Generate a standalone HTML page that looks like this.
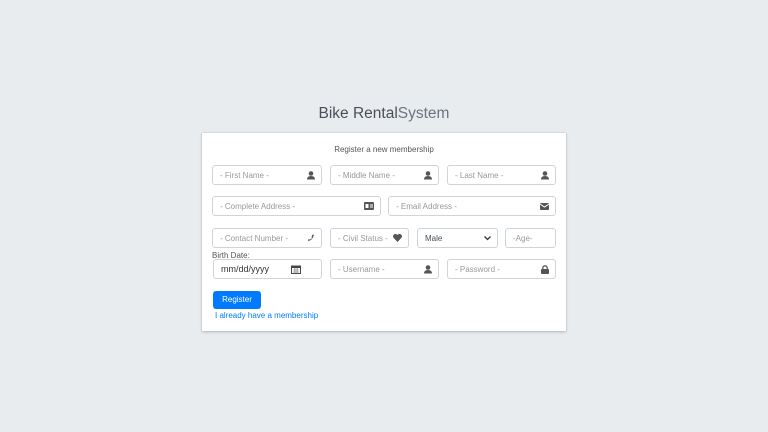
<!DOCTYPE html><html><head><style>
body{margin:0;width:768px;height:432px;background:#e9ecef;font-family:"Liberation Sans",sans-serif;position:relative;overflow:hidden}
.a{position:absolute}
.t{left:0;width:768px;text-align:center;top:105px;font-size:15.5px;color:#495057}
.t span{font-weight:300;color:#6c757d}
.card{left:202px;top:133px;width:364px;height:198px;background:#fff;box-shadow:0 0 1px rgba(0,0,0,.2),0 1px 3px rgba(0,0,0,.2)}
.i{position:absolute;height:18px;border:1px solid #ced4da;border-radius:3px;font-size:8px;color:#999;line-height:19px;padding-left:7px;box-sizing:content-box;background:#fff}
.ic{position:absolute;right:6px;top:5px}
.h{font-size:8px;color:#555}
</style></head><body>
<div class="a t">Bike Rental<span>System</span></div>
<div class="a card"></div>
<div class="a h" style="left:0;width:768px;text-align:center;top:145px">Register a new membership</div>
<svg width="0" height="0" style="position:absolute"><defs><g id="u"><circle cx="4" cy="2.5" r="2.3" fill="#555"/><path d="M0 8.5Q0 5 4 5Q8 5 8 8.5Z" fill="#555"/></g></defs></svg>
<div class="i" style="left:212px;top:165px;width:101px">- First Name -<svg class="ic" width="8" height="9"><use href="#u"/></svg></div>
<div class="i" style="left:330px;top:165px;width:100px">- Middle Name -<svg class="ic" width="8" height="9"><use href="#u"/></svg></div>
<div class="i" style="left:447px;top:165px;width:100px">- Last Name -<svg class="ic" width="8" height="9"><use href="#u"/></svg></div>
<div class="i" style="left:212px;top:196px;width:160px">- Complete Address -<svg class="ic" width="10" height="8"><rect width="10" height="8" rx="1" fill="#555"/><rect x="1.5" y="2" width="3" height="4" fill="#fff"/><rect x="6" y="2.5" width="3" height="1" fill="#fff"/><rect x="6" y="4.5" width="3" height="1" fill="#fff"/></svg></div>
<div class="i" style="left:388px;top:196px;width:159px">- Email Address -<svg class="ic" width="9" height="7" style="top:6px"><rect width="9" height="7" rx="1" fill="#555"/><path d="M0 1L4.5 4L9 1" stroke="#fff" fill="none"/></svg></div>
<div class="i" style="left:212px;top:228px;width:101px">- Contact Number -<svg class="ic" width="8" height="8"><path d="M1 7Q5 7 7 1L5.5 0.5L4.5 3L5 4Q4 5.5 2.5 5.5L1.5 5Z" fill="#555"/></svg></div>
<div class="i" style="left:330px;top:228px;width:70px">- Civil Status -<svg class="ic" width="9" height="8"><path d="M4.5 8L0.5 3.8A2.2 2.2 0 0 1 4.5 1A2.2 2.2 0 0 1 8.5 3.8Z" fill="#555"/></svg></div>
<div class="i" style="left:417px;top:228px;width:72px;color:#495057">Male<svg class="ic" width="7" height="5" style="top:7px"><path d="M0.5 0.5L3.5 3.5L6.5 0.5" stroke="#333" stroke-width="1.3" fill="none"/></svg></div>
<div class="i" style="left:505px;top:228px;width:42px">-Age-</div>
<div class="a h" style="left:212px;top:251px">Birth Date:</div>
<div class="i" style="left:213px;top:259px;width:100px;color:#333;font-size:9px">mm/dd/yyyy<svg class="ic" width="10" height="9" style="right:20px"><rect x=".5" y="1" width="9" height="7.5" fill="none" stroke="#444"/><rect x=".5" y="1" width="9" height="2" fill="#444"/><path d="M2 5H8M2 7H8M3.5 3V8.5M5 3V8.5M6.5 3V8.5" stroke="#777" stroke-width=".5"/></svg></div>
<div class="i" style="left:330px;top:259px;width:100px">- Username -<svg class="ic" width="8" height="9"><use href="#u"/></svg></div>
<div class="i" style="left:447px;top:259px;width:100px">- Password -<svg class="ic" width="8" height="9"><rect x="0" y="4" width="8" height="5" rx="1" fill="#555"/><path d="M1.8 4.5V3A2.2 2.2 0 0 1 6.2 3V4.5" stroke="#555" stroke-width="1.3" fill="none"/></svg></div>
<div class="a" style="left:213px;top:291px;width:48px;height:18px;background:#007bff;border-radius:3px;color:#fff;font-size:8px;line-height:18px;text-align:center">Register</div>
<div class="a" style="left:215px;top:311px;font-size:8px;color:#007bff">I already have a membership</div>
</body></html>
